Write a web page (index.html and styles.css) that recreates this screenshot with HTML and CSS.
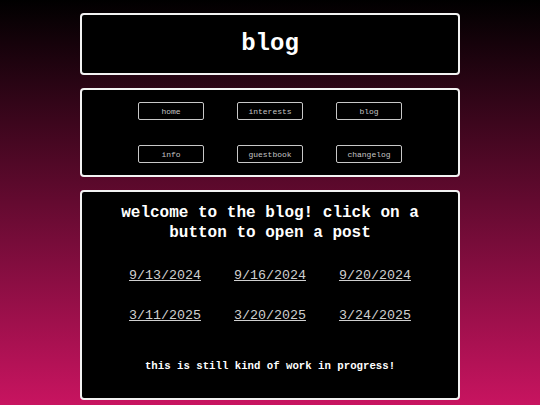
FILE: index.html
```html
<!DOCTYPE html>
<html>
<head>
<meta charset="utf-8">
<link rel="stylesheet" href="styles.css">
</head>
<body>
<div class="page">
  <div class="box header">
    <h1 class="title">blog</h1>
  </div>
  <div class="box nav">
    <a class="btn">home</a>
    <a class="btn">interests</a>
    <a class="btn">blog</a>
    <a class="btn">info</a>
    <a class="btn">guestbook</a>
    <a class="btn">changelog</a>
  </div>
  <div class="box main">
    <h2 class="welcome">welcome to the blog! click on a button to open a post</h2>
    <div class="dates">
      <a class="date">9/13/2024</a>
      <a class="date">9/16/2024</a>
      <a class="date">9/20/2024</a>
      <a class="date">3/11/2025</a>
      <a class="date">3/20/2025</a>
      <a class="date">3/24/2025</a>
    </div>
    <p class="note">this is still kind of work in progress!</p>
  </div>
</div>
</body>
</html>
```
FILE: styles.css
```css
html, body {
  margin: 0;
  padding: 0;
  height: 405px;
  overflow: hidden;
}
body {
  background: linear-gradient(to bottom, #000000 0px, #c81460 405px);
  font-family: "Liberation Mono", "Courier New", monospace;
  color: #fff;
}
.page {
  width: 380px;
  margin: 13px auto 0;
  display: flex;
  flex-direction: column;
  gap: 13px;
}
.box {
  background: #000;
  border: 2px solid #f2f2f2;
  border-radius: 4px;
}
.header {
  padding: 15px 0;
  text-align: center;
}
.title {
  margin: 0;
  font-size: 24px;
  line-height: 28px;
  font-weight: bold;
}
.nav {
  padding: 12px 0;
  display: grid;
  grid-template-columns: repeat(3, 66px);
  column-gap: 33px;
  row-gap: 25px;
  justify-content: center;
}
.btn {
  height: 18px;
  box-sizing: border-box;
  border: 1px solid #c8c8c8;
  border-radius: 2px;
  display: flex;
  align-items: center;
  justify-content: center;
  font-size: 8px;
  color: #c4c4c4;
}
.main {
  padding: 11px 20px 25px;
  text-align: center;
}
.welcome {
  margin: 0;
  font-size: 16px;
  line-height: 20px;
  font-weight: bold;
}
.dates {
  margin-top: 25px;
  display: grid;
  grid-template-columns: repeat(3, auto);
  column-gap: 33px;
  row-gap: 24px;
  justify-content: center;
}
.date {
  font-size: 13.33px;
  line-height: 16px;
  color: #d0d0d0;
  text-decoration: underline;
}
.note {
  margin: 36px 0 0;
  font-size: 10.7px;
  line-height: 13px;
  font-weight: bold;
}
```
